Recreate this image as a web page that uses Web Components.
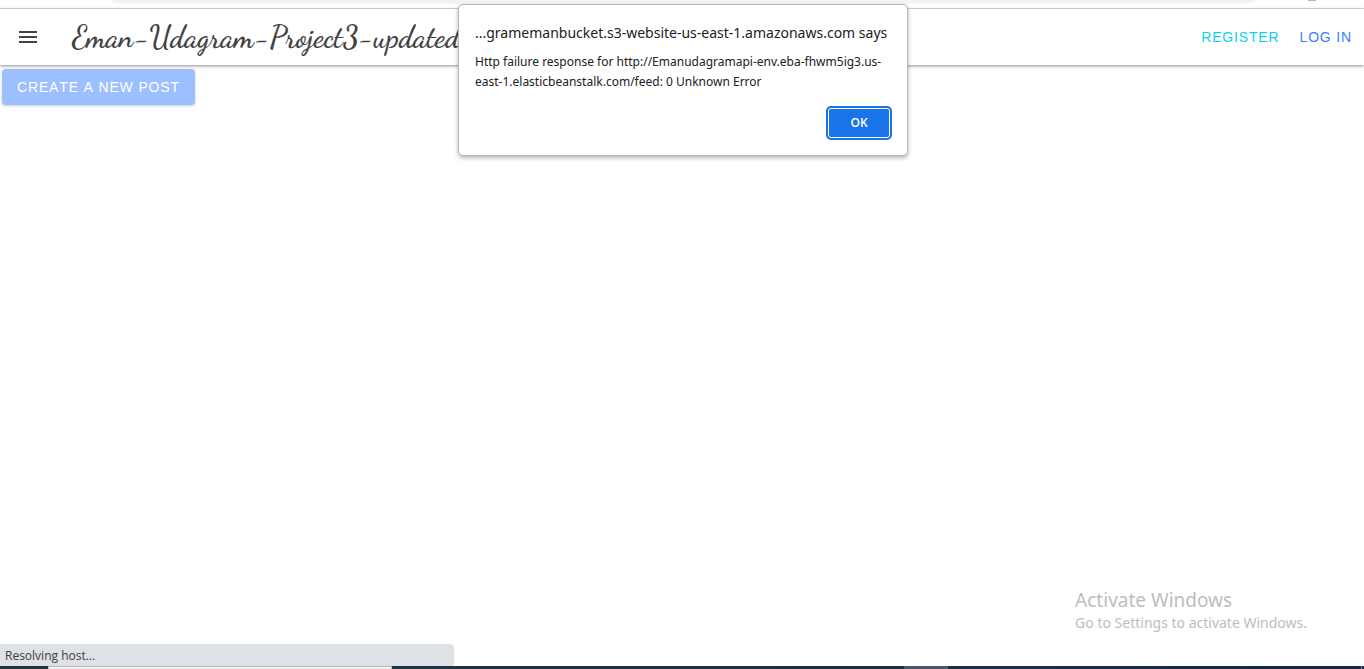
<!DOCTYPE html>
<html lang="en">
<head>
<meta charset="utf-8">
<meta name="viewport" content="width=device-width, initial-scale=1">
<title>Udagram</title>
<style>
  html, body { margin: 0; height: 100%; background: #fff; }
  body { font-family: "Liberation Sans", Arial, sans-serif; overflow: hidden; }
</style>
</head>
<body>
<app-screen>
  <browser-bar slot="top"></browser-bar>
  <app-header slot="top" heading="Eman-Udagram-Project3-updated">
    <nav-link href="#register" style="--link-color:#0cd1e8">REGISTER</nav-link>
    <nav-link href="#login" style="--link-color:#3880ff">LOG IN</nav-link>
  </app-header>
  <post-button>CREATE A NEW POST</post-button>
  <windows-notice slot="notice" heading="Activate Windows">Go to Settings to activate Windows.</windows-notice>
  <status-bubble slot="status">Resolving host...</status-bubble>
  <task-bar slot="bottom"></task-bar>
  <alert-dialog slot="overlay" heading="...gramemanbucket.s3-website-us-east-1.amazonaws.com says">Http failure response for http://Emanudagramapi-env.eba-fhwm5ig3.us-<br>east-1.elasticbeanstalk.com/feed: 0 Unknown Error</alert-dialog>
</app-screen>
<script>
  const define = (name, html, setup) => customElements.define(name, class extends HTMLElement {
    constructor() {
      super();
      const root = this.attachShadow({ mode: "open" });
      root.innerHTML = html;
      if (setup) setup(this, root);
    }
  });
  const heading = (host, root) => {
    root.querySelector("h1, h2").textContent = host.getAttribute("heading");
  };

  define("app-screen", `
    <style>
      :host { display: flex; flex-direction: column; min-height: 100vh; position: relative; }
      main { flex: 1; padding: 4px 2px; }
      .notice { display: flex; justify-content: flex-end; padding: 0 57px 11px 0; }
    </style>
    <slot name="top"></slot>
    <main><slot></slot></main>
    <div class="notice"><slot name="notice"></slot></div>
    <slot name="status"></slot>
    <slot name="bottom"></slot>
    <slot name="overlay"></slot>`);

  define("browser-bar", `
    <style>
      :host { display: flex; height: 8px; border-bottom: 1px solid #d9dadb; padding: 0 48px 0 111px; gap: 52px; }
      .address { flex: 1; height: 4px; background: #f1f3f4; border-radius: 0 0 14px 14px / 0 0 4px 4px; }
      .avatar { width: 8px; height: 1px; background: #b9b3aa; border-radius: 0 0 8px 8px; }
    </style>
    <div class="address"></div><div class="avatar"></div>`);

  define("app-header", `
    <style>
      :host { display: block; position: relative; box-shadow: 0 1px 3px rgba(0,0,0,.45); background: #fff; }
      header { display: flex; align-items: center; height: 56px; padding: 0 12px 0 19px; }
      .menu { display: flex; border: 0; padding: 0; background: none; color: #424242; }
      h1 { flex: 1; margin: 0 0 0 35px; white-space: nowrap; color: #424242;
           font: 600 30px/40px "Dancing Script", "Liberation Serif", cursive; }
      nav { display: flex; gap: 20px; }
    </style>
    <header>
      <button class="menu" aria-label="Menu">
        <svg width="18" height="12" viewBox="0 0 18 12" fill="currentColor"><path d="M0 0h18v2H0zM0 5h18v2H0zM0 10h18v2H0z"/></svg>
      </button>
      <h1></h1>
      <nav><slot></slot></nav>
    </header>`, heading);

  define("nav-link", `
    <style>
      :host { display: block; }
      a { color: var(--link-color); text-decoration: none; font-size: 14px; line-height: 20px; letter-spacing: .06em; }
    </style>
    <a><slot></slot></a>`, (host, root) => {
      root.querySelector("a").href = host.getAttribute("href");
    });

  define("post-button", `
    <style>
      :host { display: block; }
      button { display: block; height: 36px; padding: 0 15px; border: 0; border-radius: 4px;
        background: #9cc0ff; color: #fff; font: 500 14px/36px "Liberation Sans", Arial, sans-serif;
        font-kerning: none; letter-spacing: .06em; box-shadow: 0 1px 3px rgba(0,0,0,.2); }
    </style>
    <button type="button"><slot></slot></button>`);

  define("windows-notice", `
    <style>
      :host { display: block; color: #bdbdbd; font: 14px/20px "Noto Sans", sans-serif; }
      h2 { margin: 0; font-size: 19px; line-height: 26px; font-weight: 400; }
      p { margin: 0; }
    </style>
    <h2></h2><p><slot></slot></p>`, heading);

  define("status-bubble", `
    <style>
      :host { display: block; box-sizing: border-box; width: 33.3%; height: 22px; padding: 0 5px;
        background: #dee1e6; border-radius: 0 4px 0 0; color: #3c4043;
        font: 12px/24px "Open Sans", sans-serif; }
    </style>
    <slot></slot>`);

  define("task-bar", `
    <style>
      :host { display: flex; height: 3px; background: linear-gradient(90deg, #1f3640, #1c3045 65%, #1a2446); }
      .search { margin-left: 48px; box-sizing: border-box; width: 344px; background: #f2f2f2; border: 1px solid #bbb; border-bottom: 0; }
      .active { margin-left: 512px; width: 44px; background: #4c5967; }
      .desktop { margin: 0 2px 0 auto; width: 1px; background: #75809a; }
    </style>
    <div class="search"></div><div class="active"></div><div class="desktop"></div>`);

  define("alert-dialog", `
    <style>
      :host { position: absolute; top: 4px; left: 0; right: 0; display: flex; justify-content: center; }
      section { box-sizing: border-box; width: 450px; margin-right: -2px; padding: 18px 15px 15px 16px; background: #fff;
        border: 1px solid #b4b7b7; border-radius: 5px; box-shadow: 0 2px 4px rgba(0,0,0,.3);
        color: #202124; font: 12px/20px "Noto Sans", sans-serif; white-space: nowrap; }
      h2 { margin: 0 0 9px; font-size: 14px; line-height: 20px; font-weight: 400; }
      p { margin: 0; }
      footer { display: flex; justify-content: flex-end; margin-top: 14px; }
      button { width: 66px; height: 34px; padding: 0; border: 2px solid #1a73e8; border-radius: 5px;
        background: #1a73e8; box-shadow: inset 0 0 0 1px #fff; color: #fff;
        font: 600 12px/30px "Open Sans", sans-serif; }
    </style>
    <section role="alertdialog" aria-labelledby="t">
      <h2 id="t"></h2>
      <p><slot></slot></p>
      <footer><button type="button">OK</button></footer>
    </section>`, heading);
</script>
</body>
</html>
